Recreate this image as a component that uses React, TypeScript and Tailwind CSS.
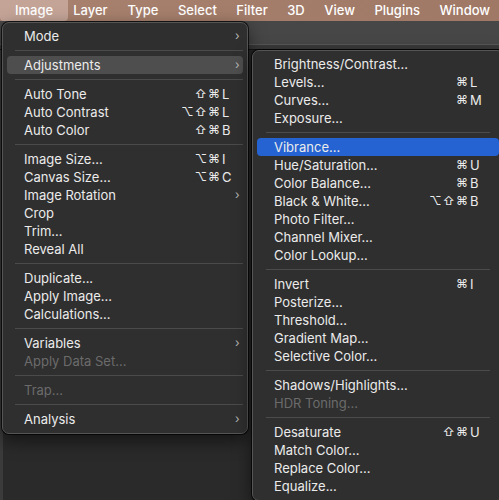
import React from 'react'

type Item =
  | { sep: true }
  | { label: string; mods?: string; keyChar?: string; sub?: boolean; disabled?: boolean; active?: 'gray' | 'blue' }

const mainItems: Item[] = [
  { label: 'Mode', sub: true },
  { sep: true },
  { label: 'Adjustments', sub: true, active: 'gray' },
  { sep: true },
  { label: 'Auto Tone', mods: '⇧⌘', keyChar: 'L' },
  { label: 'Auto Contrast', mods: '⌥⇧⌘', keyChar: 'L' },
  { label: 'Auto Color', mods: '⇧⌘', keyChar: 'B' },
  { sep: true },
  { label: 'Image Size...', mods: '⌥⌘', keyChar: 'I' },
  { label: 'Canvas Size...', mods: '⌥⌘', keyChar: 'C' },
  { label: 'Image Rotation', sub: true },
  { label: 'Crop' },
  { label: 'Trim...' },
  { label: 'Reveal All' },
  { sep: true },
  { label: 'Duplicate...' },
  { label: 'Apply Image...' },
  { label: 'Calculations...' },
  { sep: true },
  { label: 'Variables', sub: true },
  { label: 'Apply Data Set...', disabled: true },
  { sep: true },
  { label: 'Trap...', disabled: true },
  { sep: true },
  { label: 'Analysis', sub: true },
]

const subItems: Item[] = [
  { label: 'Brightness/Contrast...' },
  { label: 'Levels...', mods: '⌘', keyChar: 'L' },
  { label: 'Curves...', mods: '⌘', keyChar: 'M' },
  { label: 'Exposure...' },
  { sep: true },
  { label: 'Vibrance...', active: 'blue' },
  { label: 'Hue/Saturation...', mods: '⌘', keyChar: 'U' },
  { label: 'Color Balance...', mods: '⌘', keyChar: 'B' },
  { label: 'Black & White...', mods: '⌥⇧⌘', keyChar: 'B' },
  { label: 'Photo Filter...' },
  { label: 'Channel Mixer...' },
  { label: 'Color Lookup...' },
  { sep: true },
  { label: 'Invert', mods: '⌘', keyChar: 'I' },
  { label: 'Posterize...' },
  { label: 'Threshold...' },
  { label: 'Gradient Map...' },
  { label: 'Selective Color...' },
  { sep: true },
  { label: 'Shadows/Highlights...' },
  { label: 'HDR Toning...', disabled: true },
  { sep: true },
  { label: 'Desaturate', mods: '⇧⌘', keyChar: 'U' },
  { label: 'Match Color...' },
  { label: 'Replace Color...' },
  { label: 'Equalize...' },
]

function Menu({ items, sepClass, slotClass }: { items: Item[]; sepClass: string; slotClass: string }) {
  return (
    <div className="rounded-[7px] border border-[#555555] bg-[#2f2f2f] px-[4px] pt-[4px] pb-[5px] shadow-[0_0_0_1px_rgba(0,0,0,0.7),0_6px_18px_rgba(0,0,0,0.55)]">
      {items.map((it, i) => {
        if ('sep' in it) {
          return (
            <div key={i} className="flex h-[11px] items-center">
              <div className={`h-px flex-1 bg-[#4b4b4b] ${sepClass}`} />
            </div>
          )
        }
        const bg = it.active === 'gray' ? 'bg-[#4e4e4e]' : it.active === 'blue' ? 'bg-[#2463d1]' : ''
        const color = it.disabled ? 'text-[#6b6b6b]' : 'text-[#ebebeb]'
        return (
          <div key={i} className={`flex h-[18px] items-center rounded-[4px] pl-[17px] ${bg} ${color}`}>
            <span className="flex-1 whitespace-nowrap">{it.label}</span>
            {it.keyChar && (
              <>
                <span className="text-[12px] tracking-[1px]">{it.mods}</span>
                <span className="w-[10px] pl-[1px]">{it.keyChar}</span>
              </>
            )}
            <span className={`${slotClass} pl-[4px] text-[#b5b5b5] text-[12px]`}>{it.sub ? '›' : ''}</span>
          </div>
        )
      })}
    </div>
  )
}

export default function App() {
  const bar = ['Layer', 'Type', 'Select', 'Filter', '3D', 'View', 'Plugins', 'Window']
  return (
    <div
      className="relative h-[500px] w-[499px] overflow-hidden bg-[#2a2a2a] text-[13px] leading-none"
      style={{ fontFamily: 'Inter, "DejaVu Sans", sans-serif' }}
    >
      <div className="flex h-[21px] items-center bg-gradient-to-r from-[#a9826f] to-[#9f7866] text-[13px] font-medium text-white">
        <div className="flex h-full items-center rounded-b-[4px] bg-[#c4a497] px-[15px]">Image</div>
        {bar.map((b, i) => (
          <div key={b} className={`flex h-full items-center ${i === 0 ? 'pl-[5px] pr-[10px]' : 'pl-[10px] pr-[9.5px]'}`}>
            {b}
          </div>
        ))}
      </div>
      <div className="h-[24px] border-b border-[#585858] bg-[#474747]" />
      <div className="h-[5px] border-b border-[#141414] bg-[#3a3a3a]" />
      <div className="flex h-full">
        <div className="w-[3px] bg-[#3b3b3b]" />
      </div>

      <div className="absolute left-[2px] top-[22px] w-[246px]">
        <Menu items={mainItems} sepClass="ml-[8px]" slotClass="w-[12px]" />
      </div>
      <div className="absolute left-[252px] top-[50px] w-[252px]">
        <Menu items={subItems} sepClass="ml-[9px] mr-[9px]" slotClass="w-[20px]" />
      </div>
    </div>
  )
}
